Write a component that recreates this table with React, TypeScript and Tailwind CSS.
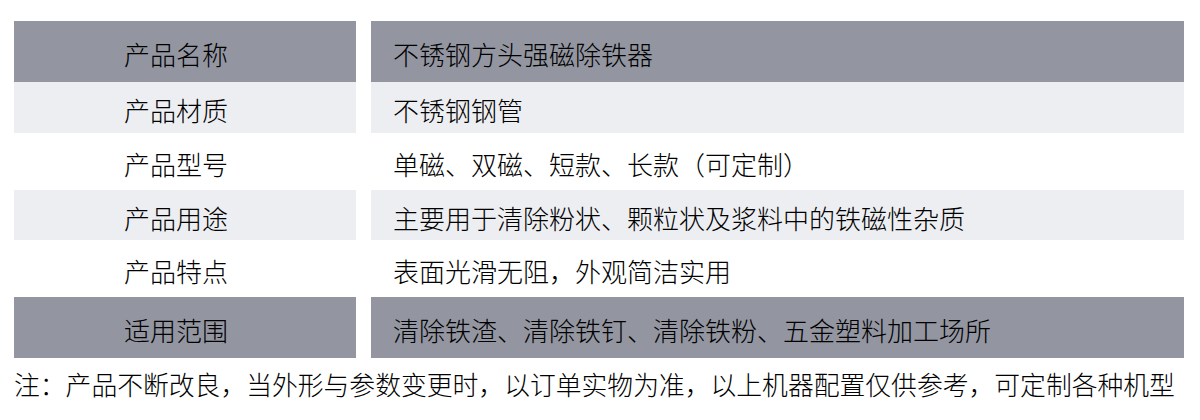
import React from "react";

type Row = { label: string; value: string; tone: "dark" | "light" | "none"; h: string };

const rows: Row[] = [
  { label: "产品名称", value: "不锈钢方头强磁除铁器", tone: "dark", h: "h-[61px]" },
  { label: "产品材质", value: "不锈钢钢管", tone: "light", h: "h-[51px]" },
  { label: "产品型号", value: "单磁、双磁、短款、长款（可定制）", tone: "none", h: "h-[57px]" },
  { label: "产品用途", value: "主要用于清除粉状、颗粒状及浆料中的铁磁性杂质", tone: "light", h: "h-[50px]" },
  { label: "产品特点", value: "表面光滑无阻，外观简洁实用", tone: "none", h: "h-[57px]" },
  { label: "适用范围", value: "清除铁渣、清除铁钉、清除铁粉、五金塑料加工场所", tone: "dark", h: "h-[61px]" },
];

const toneClass = (t: Row["tone"]) =>
  t === "dark" ? "bg-[#9396a1]" : t === "light" ? "bg-[#edeef2]" : "bg-white";

export default function App() {
  return (
    <div
      className="w-[1200px] h-[420px] bg-white text-black font-light overflow-hidden"
      style={{ fontFamily: '"Noto Sans CJK SC", "Noto Sans", sans-serif' }}
    >
      <div className="pt-[21px] pl-[14px] w-[1184px]">
        {rows.map((r) => (
          <div key={r.label} className={`flex gap-[15px] ${r.h}`}>
            <div
              className={`w-[342px] flex items-center pl-[110px] pt-[5px] text-[26px] leading-none ${toneClass(r.tone)}`}
            >
              {r.label}
            </div>
            <div
              className={`flex-1 flex items-center pl-[22px] pt-[5px] text-[26px] leading-none ${toneClass(r.tone)}`}
            >
              {r.value}
            </div>
          </div>
        ))}
        <div className="pt-[13px] text-[25.8px] leading-none">
          注：产品不断改良，当外形与参数变更时，以订单实物为准，以上机器配置仅供参考，可定制各种机型
        </div>
      </div>
    </div>
  );
}
